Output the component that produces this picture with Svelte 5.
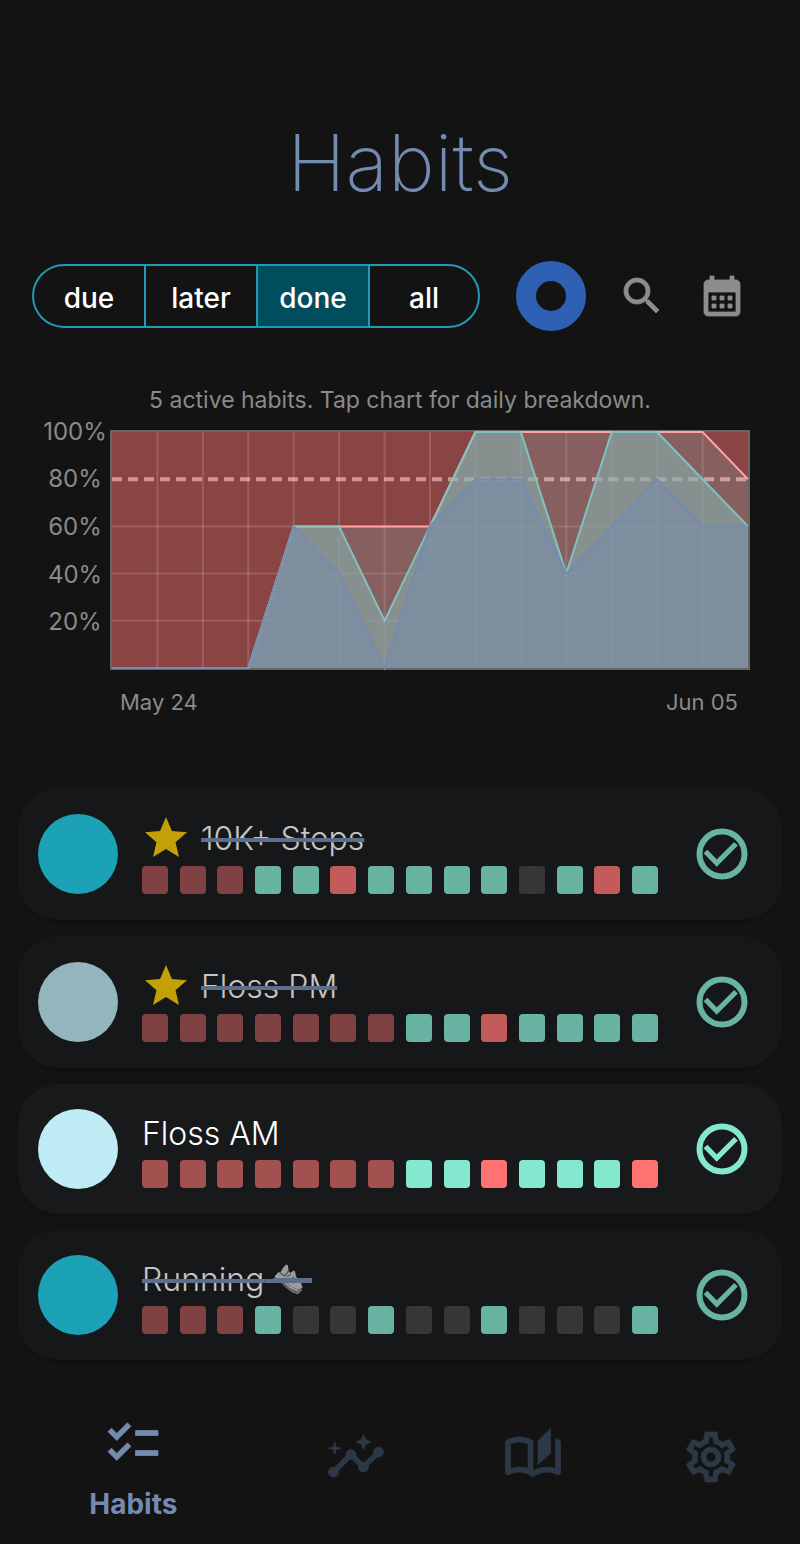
<script>
  const filters = ['due', 'later', 'done', 'all'];
  let selected = $state('done');
  let tab = $state('Habits');

  const days = 14;
  const maximum = [0, 0, 0, 0, 60, 60, 60, 60, 100, 100, 100, 100, 100, 100, 80];
  const partial = [0, 0, 0, 0, 60, 60, 20, 60, 100, 100, 40, 100, 100, 80, 60];
  const complete = [0, 0, 0, 0, 60, 40, 0, 60, 80, 80, 40, 60, 80, 60, 60];
  const levels = [100, 80, 60, 40, 20];

  const line = (values) =>
    values.map((v, i) => `${((i * 636) / days).toFixed(1)},${(236 - v * 2.36).toFixed(1)}`).join(' ');
  const area = (values) => `0,236 ${line(values)} 636,236`;

  // m: missed before start, x: missed, d: done, n: not scheduled
  const habits = [
    { name: '10K+ Steps', color: '#1ed2ec', star: true, done: true, log: 'mmmddxddddndxd' },
    { name: 'Floss PM', color: '#bfebf4', star: true, done: true, log: 'mmmmmmmddxdddd' },
    { name: 'Floss AM', color: '#bfebf4', star: false, done: false, log: 'mmmmmmmddxdddx' },
    { name: 'Running', color: '#1ed2ec', star: false, done: true, shoe: true, log: 'mmmdnndnndnnnd' }
  ];

  const tabs = [
    {
      name: 'Habits',
      path: 'M22 7h-9v2h9V7zm0 8h-9v2h9v-2zM5.54 11L2 7.46l1.41-1.41 2.12 2.12 4.24-4.24 1.41 1.41L5.54 11zm0 8L2 15.46l1.41-1.41 2.12 2.12 4.24-4.24 1.41 1.41L5.54 19z'
    },
    {
      name: 'Insights',
      path: 'M21 8c-1.45 0-2.26 1.44-1.93 2.51l-3.55 3.56c-.3-.09-.74-.09-1.04 0l-2.55-2.55C12.27 10.45 11.46 9 10 9c-1.45 0-2.27 1.44-1.93 2.52l-4.56 4.55C2.44 15.74 1 16.55 1 18c0 1.1.9 2 2 2 1.45 0 2.26-1.44 1.93-2.51l4.55-4.56c.3.09.74.09 1.04 0l2.55 2.55C12.73 16.55 13.54 18 15 18c1.45 0 2.27-1.44 1.93-2.52l3.56-3.55C21.56 12.26 23 11.45 23 10c0-1.1-.9-2-2-2zM15 9l.94-2.07L18 6l-2.06-.93L15 3l-.92 2.07L12 6l2.08.93zM3.5 11L4 9l2-.5L4 8l-.5-2L3 8l-2 .5L3 9z'
    },
    {
      name: 'Journal',
      path: 'M22.47 5.2c-.47-.24-.96-.44-1.47-.61v12.03c-1.14-.41-2.31-.62-3.5-.62-1.9 0-3.78.54-5.5 1.58V5.48C10.38 4.55 8.51 4 6.5 4c-1.79 0-3.48.44-4.97 1.2-.33.16-.53.51-.53.88v12.08c0 .58.47.99 1 .99.16 0 .32-.04.48-.12C3.69 18.4 5.05 18 6.5 18c2.07 0 3.98.82 5.5 2 1.52-1.18 3.43-2 5.5-2 1.45 0 2.81.4 4.02 1.04.16.08.32.12.48.12.52 0 1-.41 1-.99V6.08c0-.37-.2-.72-.53-.88zM10 16.62C8.86 16.21 7.69 16 6.5 16s-2.36.21-3.5.62V6.71C4.11 6.24 5.28 6 6.5 6c1.2 0 2.39.25 3.5.71v9.91zM19 .5l-5 5V15l5-4.5V.5z'
    },
    {
      name: 'Settings',
      path: 'M12,8A4,4 0 0,1 16,12A4,4 0 0,1 12,16A4,4 0 0,1 8,12A4,4 0 0,1 12,8M12,10A2,2 0 0,0 10,12A2,2 0 0,0 12,14A2,2 0 0,0 14,12A2,2 0 0,0 12,10M10,22C9.75,22 9.54,21.82 9.5,21.58L9.13,18.93C8.5,18.68 7.96,18.34 7.44,17.94L4.95,18.95C4.73,19.03 4.46,18.95 4.34,18.73L2.34,15.27C2.21,15.05 2.27,14.78 2.46,14.63L4.57,12.97L4.5,12L4.57,11L2.46,9.37C2.27,9.22 2.21,8.95 2.34,8.73L4.34,5.27C4.46,5.05 4.73,4.96 4.95,5.05L7.44,6.05C7.96,5.66 8.5,5.32 9.13,5.07L9.5,2.42C9.54,2.18 9.75,2 10,2H14C14.25,2 14.46,2.18 14.5,2.42L14.87,5.07C15.5,5.32 16.04,5.66 16.56,6.05L19.05,5.05C19.27,4.96 19.54,5.05 19.66,5.27L21.66,8.73C21.79,8.95 21.73,9.22 21.54,9.37L19.43,11L19.5,12L19.43,13L21.54,14.63C21.73,14.78 21.79,15.05 21.66,15.27L19.66,18.73C19.54,18.95 19.27,19.04 19.05,18.95L16.56,17.95C16.04,18.34 15.5,18.68 14.87,18.93L14.5,21.58C14.46,21.82 14.25,22 14,22H10M11.25,4L10.88,6.61C9.68,6.86 8.62,7.5 7.85,8.39L5.44,7.35L4.69,8.65L6.8,10.2C6.4,11.37 6.4,12.64 6.8,13.8L4.68,15.36L5.43,16.66L7.86,15.62C8.63,16.5 9.68,17.14 10.87,17.38L11.24,20H12.76L13.13,17.39C14.32,17.14 15.37,16.5 16.14,15.62L18.57,16.66L19.32,15.36L17.2,13.81C17.6,12.64 17.6,11.37 17.2,10.2L19.31,8.65L18.56,7.35L16.15,8.39C15.38,7.5 14.32,6.86 13.12,6.62L12.75,4H11.25Z'
    }
  ];
</script>

<div class="app">
  <h1>Habits</h1>

  <div class="toolbar">
    <div class="segments" role="group" aria-label="Filter habits">
      {#each filters as filter}
        <button type="button" class:selected={selected === filter} aria-pressed={selected === filter} onclick={() => (selected = filter)}>{filter}</button>
      {/each}
    </div>
    <button type="button" class="ring" aria-label="Progress"></button>
    <button type="button" class="tool" aria-label="Search">
      <svg viewBox="0 0 24 24"><path d="M15.5 14h-.79l-.28-.27C15.41 12.59 16 11.11 16 9.5 16 5.91 13.09 3 9.5 3S3 5.91 3 9.5 5.91 16 9.5 16c1.61 0 3.09-.59 4.23-1.57l.27.28v.79l5 4.99L20.49 19l-4.99-5zm-6 0C7.01 14 5 11.99 5 9.5S7.01 5 9.5 5 14 7.01 14 9.5 11.99 14 9.5 14z" /></svg>
    </button>
    <button type="button" class="tool" aria-label="Calendar">
      <svg viewBox="0 0 24 24"><path d="M19 4h-1V2h-2v2H8V2H6v2H5c-1.11 0-1.99.9-1.99 2L3 20c0 1.1.89 2 2 2h14c1.1 0 2-.9 2-2V6c0-1.1-.9-2-2-2zm0 16H5V10h14v10zM9 14H7v-2h2v2zm4 0h-2v-2h2v2zm4 0h-2v-2h2v2zm-8 4H7v-2h2v2zm4 0h-2v-2h2v2zm4 0h-2v-2h2v2z" /></svg>
    </button>
  </div>

  <section class="chart">
    <p>5 active habits. Tap chart for daily breakdown.</p>
    <div class="plot">
      <div class="levels">
        {#each levels as level}<span>{level}%</span>{/each}
      </div>
      <svg viewBox="0 0 636 236" preserveAspectRatio="none" role="img" aria-label="Daily completion">
        <rect width="636" height="236" fill="#8a4444" />
        <g stroke="#ffffff" stroke-opacity="0.15" stroke-width="2">
          {#each { length: days - 1 } as _, i}
            <path d="M{((i + 1) * 636) / days} 0V236" />
          {/each}
          {#each [60, 40, 20] as level}
            <path d="M0 {236 - level * 2.36}H636" />
          {/each}
        </g>
        <polygon points={area(maximum)} fill="#839e9e" fill-opacity="0.3" />
        <path d="M0 47.2H636" stroke="#ffcdcd" stroke-opacity="0.6" stroke-width="4" stroke-dasharray="10 6" />
        <polygon points={area(partial)} fill="#86b1af" fill-opacity="0.6" />
        <polygon points={area(complete)} fill="#7a8daa" fill-opacity="0.6" />
        <g fill="none" stroke-width="2">
          <polyline points={line(maximum)} stroke="#ffa3a3" />
          <polyline points={line(partial)} stroke="#80c2c0" />
          <polyline points={line(complete)} stroke="#748bb0" />
        </g>
      </svg>
    </div>
    <div class="dates"><span>May 24</span><span>Jun 05</span></div>
  </section>

  <ul class="habits">
    {#each habits as habit}
      <li class:done={habit.done}>
        <span class="dot" style="background: {habit.color}"></span>
        <div class="body">
          <h2>
            {#if habit.star}
              <svg class="star" viewBox="2 2 20 19"><path d="M12 17.27L18.18 21l-1.64-7.03L22 9.24l-7.19-.61L12 2 9.19 8.63 2 9.24l5.46 4.73L5.82 21z" /></svg>
            {/if}
            <span class="name">{habit.name}{#if habit.shoe}&nbsp;{/if}</span>
            {#if habit.shoe}
              <svg class="shoe" viewBox="0 0 39 36" role="img" aria-label="running shoe">
                <path d="M2 14L6 9.500 7 11l3-5 3-3.500 2 1 .5 5.500 2 2 3-2.500 1.500 1 1 5 5 6 1.500 5-3 2.500-8-3-6.500-6z" fill="#cbc9c8" />
                <path d="M2 14l9 5 6 6 8 3 3.500-2.500.5 3-4 4-6-2-7-5.500-6-6.500-4-2z" fill="#86807c" />
                <path d="M2 14l9 5 6 6 8 3.500" fill="none" stroke="#e8e6e5" stroke-width="1.2" />
                <path d="M7 11l5 3 3.500-5M14 15l4-3M17 18l4-3M20 21l4-2" fill="none" stroke="#77736f" stroke-width="1.5" />
                <path d="M0 18.500H39" stroke="#748bb0" stroke-width="5" />
              </svg>
            {/if}
          </h2>
          <div class="log">
            {#each habit.log as day}<i class={day}></i>{/each}
          </div>
        </div>
        <button type="button" class="check" aria-label="Complete {habit.name}">
          <svg viewBox="0 0 24 24"><circle cx="12" cy="12" r="9" /><path d="M5.4 11L9.9 15.600 17.600 7.900" /></svg>
        </button>
      </li>
    {/each}
  </ul>

  <nav>
    {#each tabs as item}
      <button type="button" class:active={tab === item.name} aria-label={item.name} onclick={() => (tab = item.name)}>
        <svg viewBox="0 0 24 24"><path fill-rule="evenodd" d={item.path} /></svg>
        {#if tab === item.name}<span>{item.name}</span>{/if}
      </button>
    {/each}
  </nav>
</div>

<style>
  :global(body) {
    margin: 0;
    background: #131313;
  }
  .app {
    font-family: Inter, 'Noto Sans', sans-serif;
    color: #fff;
    padding-top: 116px;
  }
  button {
    font: inherit;
    color: inherit;
    background: none;
    border: 0;
    padding: 0;
    cursor: pointer;
  }
  svg {
    display: block;
  }
  h1 {
    margin: 0;
    text-align: center;
    font-size: 79px;
    line-height: 92px;
    font-weight: 250;
    color: #748bb0;
  }
  .toolbar {
    display: flex;
    align-items: center;
    gap: 32px;
    margin-top: 53px;
    padding: 0 54px 0 32px;
  }
  .segments {
    flex: 1;
    display: grid;
    grid-template-columns: repeat(4, 1fr);
    height: 64px;
    margin-right: 4px;
  }
  .segments button {
    font-size: 28px;
    font-weight: 500;
    padding-top: 3px;
    border: 2px solid #2199b5;
    border-right-width: 0;
  }
  .segments button:first-child {
    border-radius: 32px 0 0 32px;
  }
  .segments button:last-child {
    border-right-width: 2px;
    border-radius: 0 32px 32px 0;
  }
  .segments .selected {
    background: #004e5d;
  }
  .ring {
    width: 70px;
    height: 70px;
    border: 20px solid #2e60b4;
    border-radius: 50%;
  }
  .tool svg {
    width: 48px;
    height: 48px;
    fill: #8d8d8d;
    stroke: #8d8d8d;
    stroke-width: 0.4;
  }
  .chart {
    margin-top: 54px;
    color: #8a8a8a;
    font-size: 22px;
    line-height: 30px;
  }
  .chart p {
    margin: 0 0 15px;
    text-align: center;
    font-size: 23px;
  }
  .plot {
    display: grid;
    grid-template-columns: 70px 1fr;
    padding: 0 50px 0 40px;
  }
  .plot svg {
    width: 100%;
    height: 240px;
    box-sizing: border-box;
    border: 2px solid #666;
    overflow: visible;
  }
  .levels {
    display: grid;
    grid-template-rows: repeat(5, 1fr);
    align-items: center;
    justify-items: center;
    height: 238px;
    margin-top: -22px;
    font-size: 24px;
  }
  .dates {
    display: flex;
    justify-content: space-between;
    margin-top: 17px;
    padding: 0 62px 0 120px;
  }
  .habits {
    list-style: none;
    margin: 71px 18px 0;
    padding: 0;
    display: grid;
    gap: 16px;
  }
  li {
    display: flex;
    align-items: center;
    padding: 24px 30px 24px 20px;
    border-radius: 40px;
    background: #18191b;
    box-shadow: 0 2px 3px rgba(0, 0, 0, 0.2);
  }
  li.done {
    background: #161718;
  }
  .done > * {
    opacity: 0.75;
  }
  .dot {
    width: 80px;
    height: 80px;
    border-radius: 50%;
  }
  .body {
    flex: 1;
    min-width: 0;
    margin: 0 34px 0 24px;
    padding: 2px 0;
  }
  h2 {
    display: flex;
    align-items: center;
    margin: 0 0 7px;
    padding-top: 5px;
    font-size: 32px;
    line-height: 38px;
    font-weight: 300;
  }
  .done .name {
    text-decoration: line-through 4px #748bb0;
  }
  .star {
    width: 42px;
    height: 40px;
    margin: -2px 14px 2px 3px;
    fill: #fbd000;
  }
  .shoe {
    width: 39px;
    height: 36px;
  }
  .log {
    display: flex;
    justify-content: space-between;
  }
  .log i {
    width: 26px;
    height: 28px;
    border-radius: 4px;
  }
  .m {
    background: #a35050;
  }
  .x {
    background: #ff7272;
  }
  .d {
    background: #84e8cf;
  }
  .n {
    background: #404143;
  }
  .check svg {
    width: 60px;
    height: 60px;
    fill: none;
    stroke: #84e8cf;
    stroke-width: 2.4;
  }
  .check path {
    stroke-width: 2.1;
  }
  nav {
    display: grid;
    grid-template-columns: 3fr 2fr 2fr 2fr;
    margin-top: 48px;
    height: 132px;
  }
  nav button {
    display: flex;
    flex-direction: column;
    align-items: center;
    padding-top: 19px;
    color: #2d3846;
  }
  nav .active {
    padding-top: 5px;
    color: #748bb0;
  }
  nav svg {
    width: 60px;
    height: 60px;
    fill: currentColor;
    stroke: currentColor;
    stroke-width: 0.3;
  }
  nav span {
    margin-top: 13px;
    font-size: 28px;
    line-height: 36px;
    font-weight: 700;
  }
</style>
